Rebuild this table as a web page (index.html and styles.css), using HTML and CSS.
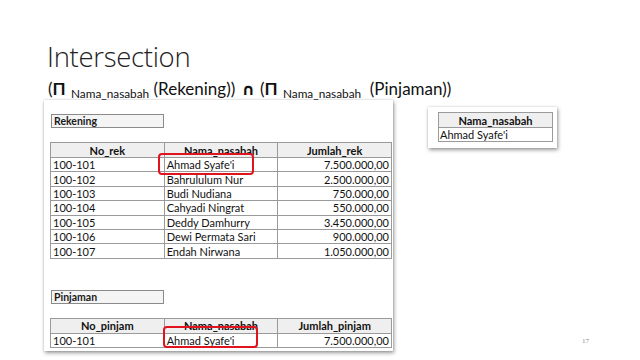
FILE: index.html
```html
<!DOCTYPE html>
<html>
<head>
<meta charset="utf-8">
<link rel="stylesheet" href="styles.css">
</head>
<body>
<div class="slide">
  <h1 class="title">Intersection</h1>
  <div class="formula">(<b class="pi">Π</b> <sub>Nama_nasabah</sub> (Rekening)) <b class="cap">∩</b> (<b class="pi">Π</b> <sub>Nama_nasabah</sub> &nbsp;(Pinjaman))</div>
  <div class="content">
    <div class="card left">
      <div class="label">Rekening</div>
      <div class="tablewrap">
        <table class="grid">
          <tr class="head"><th>No_rek</th><th>Nama_nasabah</th><th>Jumlah_rek</th></tr>
          <tr><td>100-101</td><td>Ahmad Syafe'i</td><td class="num">7.500.000,00</td></tr>
          <tr><td>100-102</td><td>Bahrululum Nur</td><td class="num">2.500.000,00</td></tr>
          <tr><td>100-103</td><td>Budi Nudiana</td><td class="num">750.000,00</td></tr>
          <tr><td>100-104</td><td>Cahyadi Ningrat</td><td class="num">550.000,00</td></tr>
          <tr><td>100-105</td><td>Deddy Damhurry</td><td class="num">3.450.000,00</td></tr>
          <tr><td>100-106</td><td>Dewi Permata Sari</td><td class="num">900.000,00</td></tr>
          <tr><td>100-107</td><td>Endah Nirwana</td><td class="num">1.050.000,00</td></tr>
        </table>
        <div class="mark mark1"></div>
      </div>
      <div class="label label2">Pinjaman</div>
      <div class="tablewrap">
        <table class="grid">
          <tr class="head"><th>No_pinjam</th><th>Nama_nasabah</th><th>Jumlah_pinjam</th></tr>
          <tr><td>100-101</td><td>Ahmad Syafe'i</td><td class="num">7.500.000,00</td></tr>
        </table>
        <div class="mark mark2"></div>
      </div>
    </div>
    <div class="card right">
      <table class="grid small">
        <tr class="head"><th>Nama_nasabah</th></tr>
        <tr><td>Ahmad Syafe'i</td></tr>
      </table>
    </div>
  </div>
  <div class="pagenum">17</div>
</div>
</body>
</html>
```
FILE: styles.css
```css
html, body { margin: 0; padding: 0; background: #fff; }
.slide {
  width: 640px; height: 360px; position: relative; overflow: hidden;
  background: #fff; font-family: "Open Sans", Lato, sans-serif; color: #1a1a1a;
}
.title {
  margin: 0; padding: 39px 0 0 47px; height: 36px;
  font-family: "Open Sans", sans-serif; font-weight: 300; font-size: 27.5px;
  line-height: 36px; color: #222; letter-spacing: -0.3px;
}
.formula {
  padding: 3px 0 0 48px; height: 22px; font-family: Lato, sans-serif; font-size: 17px;
  line-height: 22px; color: #111; white-space: nowrap;
}
.formula .pi { font-weight: 700; }
.formula sub { font-size: 11.8px; line-height: 0; vertical-align: -3px; margin-left: 1px; }
.formula .cap { font-family: "DejaVu Sans", sans-serif; font-weight: 700; font-size: 16px; margin: 0 1px 0 2px; }
.content { display: flex; align-items: flex-start; padding: 0 0 0 44px; }
.card {
  background: #fff;
  box-shadow: 1px 2px 4px rgba(0,0,0,0.4), 0 0 2px rgba(0,0,0,0.15);
}
.left { width: 349px; padding: 14px 0 3px 0; box-sizing: border-box; }
.right { margin-left: 35px; margin-top: 7px; padding: 5px 4px 6px 10px; }
.label {
  margin-left: 7px; width: 113px; height: 14px; box-sizing: border-box;
  border: 1px solid #8a8a8a; background: #f4f4f4;
  font-family: Lato, sans-serif; font-weight: 700; font-size: 10.5px; line-height: 12px;
  padding-left: 2px;
}
.label2 { margin-top: 31px; }
.tablewrap { position: relative; margin-top: 14px; margin-left: 6px; width: 342px; }
.grid {
  border-collapse: collapse; font-family: Lato, sans-serif; font-size: 11px; color: #111;
}
.left .grid { width: 342px; table-layout: fixed; }
.grid th, .grid td {
  border: 1px solid #9a9a9a; padding: 0 2px; height: 13.4px; line-height: 13px;
  text-align: left; white-space: nowrap; overflow: hidden;
}
.grid .head th { background: #efefef; text-align: center; font-weight: 700; height: 14px; }
.grid td.num { text-align: right; }
.small { width: 115px; }
.small td { padding-left: 1px; }
.mark {
  position: absolute; border: 2px solid #e0141e; border-radius: 4px;
}
.mark1 { left: 108px; top: 11px; width: 92px; height: 18px; }
.mark2 { left: 113px; top: 8px; width: 91px; height: 18px; }
.pagenum {
  position: absolute; left: 582px; top: 337px; font-size: 7px; color: #8a8a8a;
  font-family: "Liberation Serif", serif;
}
```
